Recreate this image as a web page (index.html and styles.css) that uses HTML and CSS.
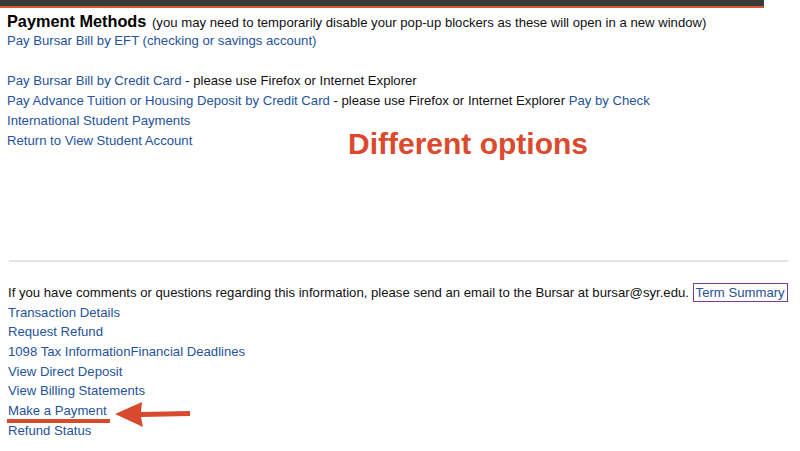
FILE: index.html
```html
<!DOCTYPE html>
<html lang="en">
<head>
    <meta charset="UTF-8">
    <title>Payment Methods</title>
    <link rel="stylesheet" href="styles.css">
</head>
<body>

<div class="topbar"></div>

<div class="methods">
    <div class="line"><span class="title">Payment Methods</span> (you may need to temporarily disable your pop-up blockers as these will open in a new window)</div>
    <div class="line"><a href="#">Pay Bursar Bill by EFT (checking or savings account)</a></div>
    <div class="line"></div>
    <div class="line"><a href="#">Pay Bursar Bill by Credit Card</a> - please use Firefox or Internet Explorer</div>
    <div class="line"><a href="#">Pay Advance Tuition or Housing Deposit by Credit Card</a> - please use Firefox or Internet Explorer <a href="#">Pay by Check</a></div>
    <div class="line"><a href="#">International Student Payments</a></div>
    <div class="line"><a href="#">Return to View Student Account</a></div>
</div>

<div class="note">Different options</div>

<div class="divider"></div>

<div class="footer">
    <div class="row">If you have comments or questions regarding this information, please send an email to the Bursar at bursar@syr.edu. <a href="#" class="boxed">Term Summary</a></div>
    <div class="row"><a href="#">Transaction Details</a></div>
    <div class="row"><a href="#">Request Refund</a></div>
    <div class="row"><a href="#">1098 Tax Information</a><a href="#">Financial Deadlines</a></div>
    <div class="row"><a href="#">View Direct Deposit</a></div>
    <div class="row"><a href="#">View Billing Statements</a></div>
    <div class="row"><a href="#" class="marked">Make a Payment</a></div>
    <div class="row"><a href="#">Refund Status</a></div>
</div>

<svg class="arrow" width="80" height="30" viewBox="0 0 80 30">
    <polygon points="0,13 27,1 26,11 75,10 75,15 26,16 28,26" fill="#d84a2e"/>
</svg>

</body>
</html>
```

FILE: styles.css
```css
body {
    margin: 0;
    font-family: "Liberation Sans", Arial, sans-serif;
    font-size: 13.15px;
    color: #111;
    background-color: white;
    position: relative;
}
a {
    color: #26539a;
    text-decoration: none;
}
.topbar {
    width: 764px;
    height: 6px;
    background-color: #3b3a39;
    border-bottom: 2px solid #d65a33;
}
.methods {
    padding: 3px 0 0 7px;
}
.line {
    height: 20px;
    line-height: 20px;
    white-space: nowrap;
}
.title {
    font-size: 16.3px;
    font-weight: bold;
    color: #000;
    margin-right: 2px;
}
.note {
    position: absolute;
    left: 348px;
    top: 129px;
    font-size: 30px;
    line-height: 30px;
    font-weight: bold;
    color: #db4a2d;
}
.divider {
    margin: 109px 12px 0 9px;
    border-top: 2px solid #e4e4e4;
}
.footer {
    padding: 21px 0 0 8px;
}
.row {
    height: 19.7px;
    line-height: 19.7px;
    white-space: nowrap;
}
.boxed {
    border: 1px solid #7d3a96;
    padding: 1px 2px;
}
.marked {
    display: inline-block;
    border-bottom: 4px solid #d84a2e;
    line-height: 17px;
    margin-left: -1px;
    padding: 0 3px 0 1px;
}
.arrow {
    position: absolute;
    left: 115px;
    top: 401px;
}
```
